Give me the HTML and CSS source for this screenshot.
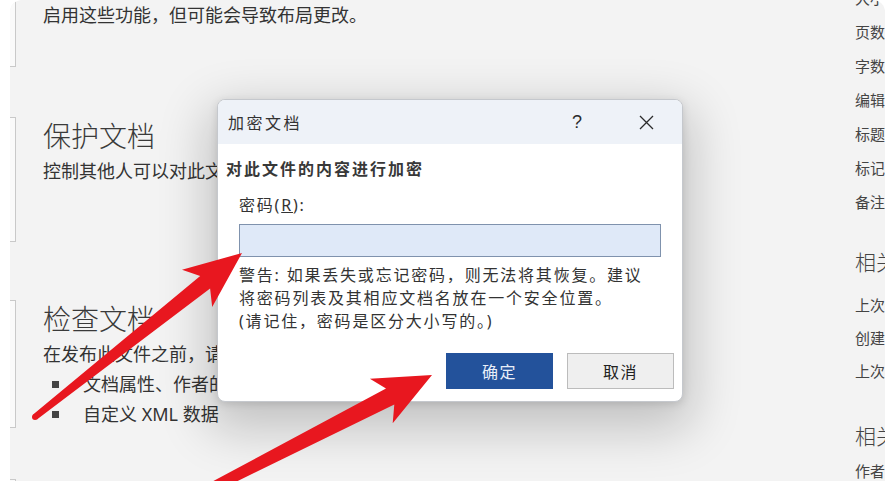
FILE: index.html
```html
<!DOCTYPE html>
<html lang="zh-CN">
  <head>
    <meta charset="UTF-8" />
    <meta name="viewport" content="width=device-width, initial-scale=1.0" />
    <title>加密文档</title>
    <link rel="stylesheet" href="styles.css">
  </head>
  <body>
    <div class="backstage">
      <div class="info">
        <section class="group g1">
          <div class="btn-box"></div>
          <div class="group-text">
            <p class="desc">启用这些功能，但可能会导致布局更改。</p>
          </div>
        </section>
        <section class="group g2">
          <div class="btn-box"></div>
          <div class="group-text">
            <h2>保护文档</h2>
            <p class="desc">控制其他人可以对此文档所做的更改类型。</p>
          </div>
        </section>
        <section class="group g3">
          <div class="btn-box"></div>
          <div class="group-text">
            <h2>检查文档</h2>
            <p class="desc">在发布此文件之前，请注意其是否包含:</p>
            <ul class="contents">
              <li>文档属性、作者的姓名和相关日期</li>
              <li>自定义 XML 数据</li>
            </ul>
          </div>
        </section>
        <section class="group g4">
          <div class="btn-box"></div>
        </section>
      </div>

      <div class="props">
        <div class="prop">大小</div>
        <div class="prop">页数</div>
        <div class="prop">字数</div>
        <div class="prop">编辑时间总计</div>
        <div class="prop">标题</div>
        <div class="prop">标记</div>
        <div class="prop">备注</div>
        <h3>相关日期</h3>
        <div class="dates">
          <div class="prop">上次修改时间</div>
          <div class="prop">创建时间</div>
          <div class="prop">上次打印时间</div>
        </div>
        <h3>相关人员</h3>
        <div class="people">
          <div class="prop">作者</div>
        </div>
      </div>
    </div>

    <div class="dialog">
      <div class="dialog-title">
        <span class="caption">加密文档</span>
        <span class="title-btn">?</span>
        <span class="title-btn close">
          <svg width="15" height="15" viewBox="0 0 15 15">
            <path d="M1 1 L14 14 M14 1 L1 14" stroke="#2b2b2b" stroke-width="1.3" fill="none" />
          </svg>
        </span>
      </div>
      <div class="dialog-body">
        <div class="dialog-heading">对此文件的内容进行加密</div>
        <div class="field">
          <label for="pwd">密码(<u>R</u>):</label>
          <input type="password" id="pwd" />
          <p class="warning">
            警告: 如果丢失或忘记密码，则无法将其恢复。建议<br />
            将密码列表及其相应文档名放在一个安全位置。<br />
            (请记住，密码是区分大小写的。)
          </p>
        </div>
        <div class="actions">
          <button class="ok">确定</button>
          <button class="cancel">取消</button>
        </div>
      </div>
    </div>

    <!-- annotation arrows -->
    <svg class="marks" width="890" height="481" viewBox="0 0 890 481">
      <path
        d="M242 253 L182 269.8 L200.2 276 L33.1 414.6 L36.9 419.4 L210.1 288.4 L212.2 307 Z"
        fill="#e8171f"
      />
      <circle cx="35" cy="417" r="3" fill="#e8171f" />
      <path
        d="M432 375 L369.9 378.7 L386 388.4 L198.3 489.1 L202.9 498 L394.3 404.5 L392.7 423.2 Z"
        fill="#e8171f"
      />
    </svg>
  </body>
</html>
```

FILE: styles.css
```css
body {
  margin: 0;
  background: #ffffff;
  font-family: "Noto Sans", "Noto Sans CJK SC", sans-serif;
  color: #333333;
  position: relative;
  width: 890px;
  height: 481px;
  overflow: hidden;
}
.backstage {
  margin-left: 10px;
  width: 875px;
  height: 481px;
  background: #f3f3f3;
  border-radius: 12px 12px 0 0;
  overflow: hidden;
  display: flex;
}
.info {
  width: 845px;
  flex-shrink: 0;
}
.group {
  display: flex;
  gap: 27px;
}
.btn-box {
  width: 5px;
  flex-shrink: 0;
  background: #fafafa;
  border: 1px solid #c9c9c9;
  border-left: none;
}
.g1 .btn-box {
  height: 66px;
  border-top: none;
}
.g2 {
  margin-top: 50px;
}
.g2 .btn-box {
  height: 123px;
}
.g3 {
  margin-top: 58px;
}
.g3 .btn-box {
  height: 126px;
}
.g4 {
  margin-top: 50px;
}
.g4 .btn-box {
  height: 126px;
}
.group-text {
  font-size: 18px;
  white-space: nowrap;
}
.desc {
  margin: 0;
  line-height: 22px;
}
.g1 .desc {
  padding-top: 4px;
}
h2 {
  margin: 0;
  font-size: 28px;
  line-height: 38px;
  font-weight: 300;
  color: #3a3a3a;
}
h2 + .desc {
  margin-top: 5px;
}
.contents {
  list-style: none;
  margin: 4px 0 0;
  padding: 0;
}
.contents li {
  display: flex;
  align-items: center;
  line-height: 30px;
}
.contents li::before {
  content: "";
  width: 7px;
  height: 7px;
  background: #444444;
  margin-left: 9px;
  margin-right: 24px;
}

/* right column */
.props {
  width: 120px;
  flex-shrink: 0;
  margin-top: -19px;
  font-size: 15px;
  color: #444444;
  white-space: nowrap;
}
.prop {
  line-height: 34px;
}
.props h3 {
  margin: 26px 0 0;
  font-size: 21px;
  line-height: 34px;
  font-weight: 300;
}
.dates {
  margin-top: 10px;
}
.dates .prop,
.people .prop {
  line-height: 33px;
}
.dates + h3 {
  margin-top: 31px;
}
.people {
  margin-top: 2px;
}

/* dialog */
.dialog {
  position: absolute;
  left: 217px;
  top: 99px;
  width: 466px;
  height: 303px;
  box-sizing: border-box;
  background: #ffffff;
  border: 1px solid #c5c8cd;
  border-radius: 8px;
  overflow: hidden;
  box-shadow: 0 18px 50px 10px rgba(0, 0, 0, 0.2),
    0 2px 8px rgba(0, 0, 0, 0.12);
  display: flex;
  flex-direction: column;
}
.dialog-title {
  height: 44px;
  flex-shrink: 0;
  background: #eef2f8;
  display: flex;
  align-items: center;
  padding-left: 10px;
  padding-right: 13px;
  gap: 23px;
  font-size: 16px;
}
.caption {
  flex: 1;
  letter-spacing: 2.5px;
}
.title-btn {
  width: 46px;
  text-align: center;
  font-family: "Liberation Sans", sans-serif;
  font-size: 18px;
  color: #2b2b2b;
}
.title-btn.close {
  display: flex;
  justify-content: center;
}
.dialog-body {
  padding: 14px 8px 12px 8px;
}
.dialog-heading {
  font-size: 16px;
  font-weight: bold;
  letter-spacing: 2px;
  line-height: 22px;
  color: #383838;
}
.field {
  padding-left: 13px;
  margin-top: 14px;
  font-size: 16px;
  letter-spacing: 1.8px;
}
.field label {
  display: block;
  line-height: 22px;
}
.field input {
  display: block;
  margin-top: 8px;
  width: 422px;
  height: 33px;
  box-sizing: border-box;
  background: #dfe9f8;
  border: 1px solid #7f92ad;
  outline: none;
}
.warning {
  margin: 7px 0 0;
  line-height: 23px;
  white-space: nowrap;
}
.actions {
  margin-top: 20px;
  display: flex;
  justify-content: flex-end;
  gap: 14px;
}
.actions button {
  width: 107px;
  height: 36px;
  font-family: "Noto Sans", "Noto Sans CJK SC", sans-serif;
  font-size: 16px;
  letter-spacing: 1.5px;
  cursor: pointer;
}
.ok {
  background: #23529b;
  color: #e8eef8;
  border: none;
}
.cancel {
  background: #efefef;
  color: #222222;
  border: 1px solid #bcbcbc;
}
.marks {
  position: absolute;
  left: 0;
  top: 0;
  pointer-events: none;
}
```
